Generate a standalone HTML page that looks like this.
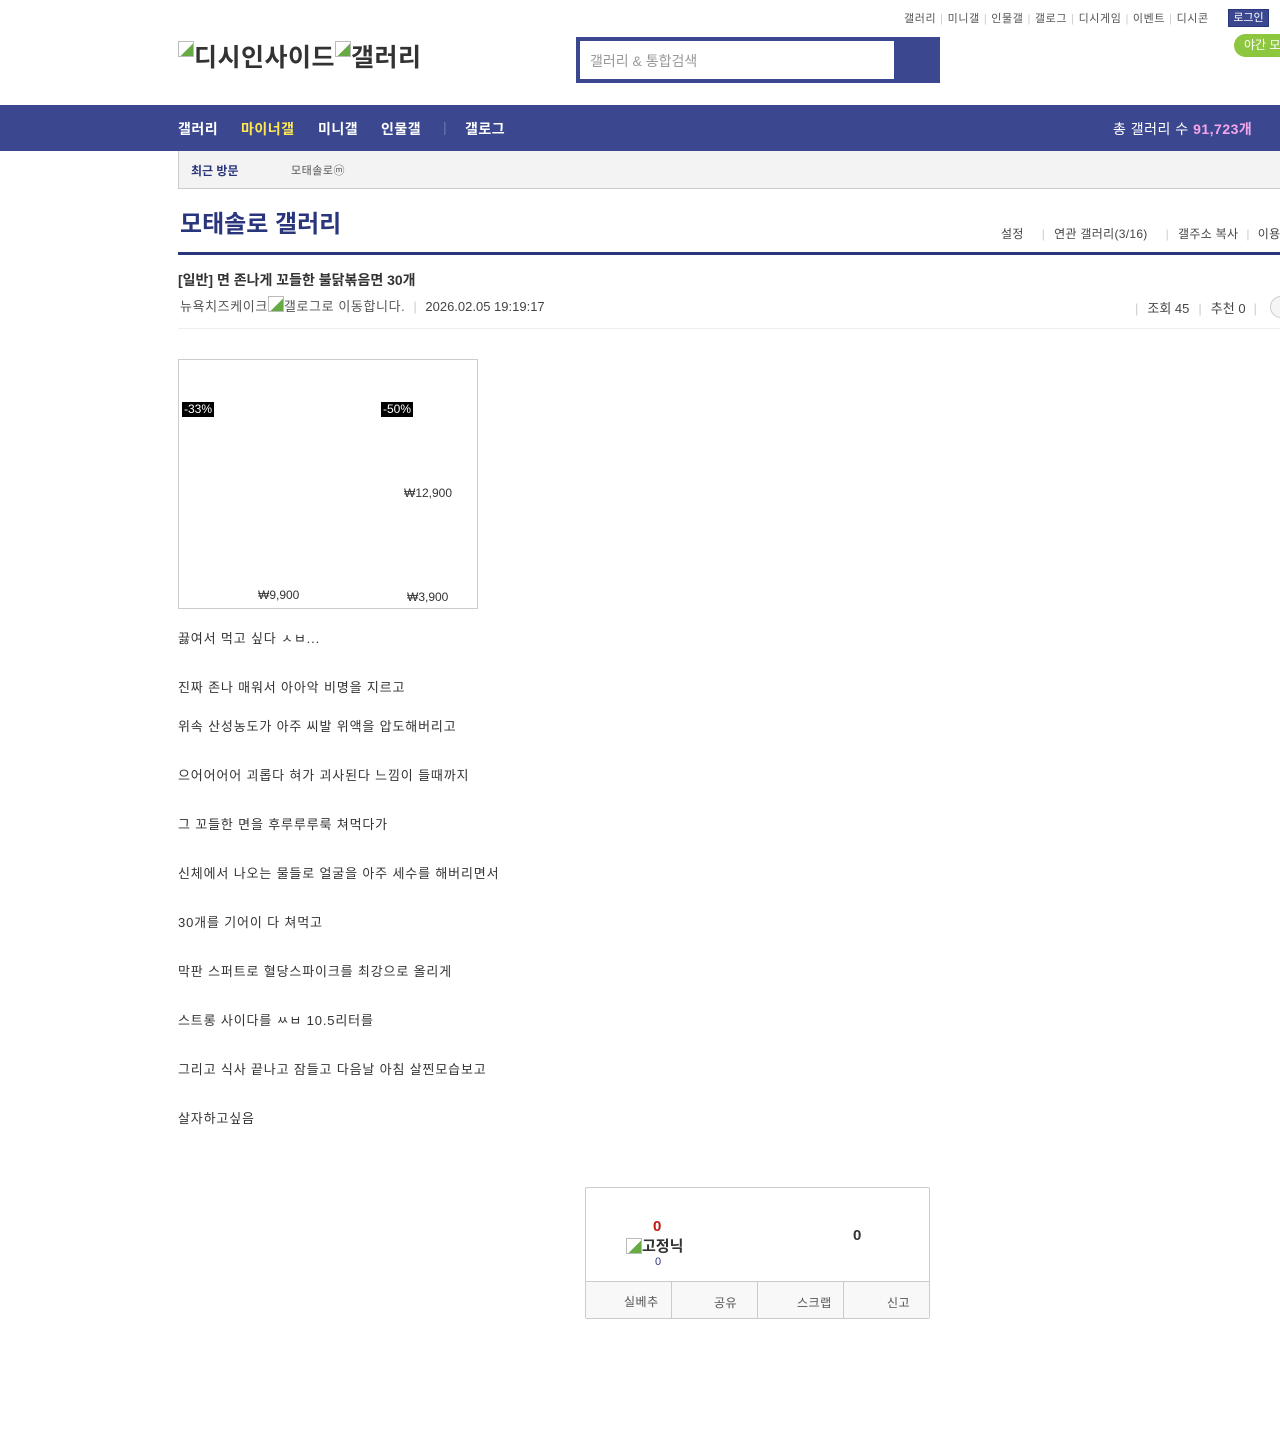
<!DOCTYPE html>
<html><head><meta charset="utf-8"><style>
*{margin:0;padding:0;box-sizing:border-box}
body{width:1280px;height:1430px;overflow:hidden;background:#fff;font-family:"Liberation Sans","Noto Sans CJK KR",sans-serif;color:#333;position:relative}
.a{position:absolute;white-space:nowrap}
.top{top:10px;left:904px;font-size:11px;color:#555;letter-spacing:0.6px}
.top i{font-style:normal;color:#ccc;margin:0 4px}
.login{top:9px;left:1228px;width:41px;height:18px;background:#3b4890;border:1px solid #29367c;color:#fff;font-size:11px;text-align:center;line-height:16px}
.night{top:34px;left:1234px;width:70px;height:23px;background:#8dc63f;border-radius:12px;color:#fff;font-size:12px;line-height:23px;padding-left:10px}
.logo{top:38px;left:178px;font-size:25px;font-weight:bold;color:#333;letter-spacing:0.5px}
.br{display:inline-block;width:16px;height:16px;border:1px solid #bbb;background:linear-gradient(135deg,#fff 55%,#6a4 56%);vertical-align:top;margin-top:3px}
.search{top:37px;left:576px;width:364px;height:46px;background:#3b4890}
.search div{position:absolute;left:4px;top:4px;width:314px;height:38px;background:#fff;font-size:14px;color:#999;padding:13px 10px;line-height:14px}
.nav{top:105px;left:0;width:1280px;height:46px;background:#3b4890}
.nav span{position:absolute;top:14px;font-size:14px;font-weight:bold;color:#fff;letter-spacing:0.5px}
.sub{top:151px;left:178px;width:1102px;height:38px;background:#f3f3f3;border-left:1px solid #ccc;border-bottom:1px solid #ccc}
.h1{top:204px;left:180px;font-size:24px;font-weight:bold;color:#29367c}
.line{top:252px;left:178px;width:1102px;height:3px;background:#29367c}
.p{left:178px;font-size:13px;color:#333;letter-spacing:0.85px}
</style></head><body>
<div class="a top">갤러리<i>|</i>미니갤<i>|</i>인물갤<i>|</i>갤로그<i>|</i>디시게임<i>|</i>이벤트<i>|</i>디시콘</div>
<div class="a login">로그인</div>
<div class="a night">야간 모드</div>
<div class="a logo"><span class="br"></span>디시인사이드<span class="br"></span>갤러리</div>
<div class="a search"><div>갤러리 &amp; 통합검색</div></div>
<div class="a nav">
<span style="left:178px">갤러리</span><span style="left:241px;color:#ffe84f">마이너갤</span><span style="left:318px">미니갤</span><span style="left:381px">인물갤</span><span style="left:443px;color:#6b76b0;font-weight:normal">|</span><span style="left:465px">갤로그</span>
<span style="left:1113px;font-weight:normal">총 갤러리 수 <b style="color:#f5a6ea">91,723개</b></span></div>
<div class="a sub"><span class="a" style="left:12px;top:11px;font-size:12px;font-weight:bold;color:#29367c">최근 방문</span><span class="a" style="left:112px;top:11px;font-size:11px;color:#555;letter-spacing:0.5px">모태솔로ⓜ</span></div>
<div class="a h1">모태솔로 갤러리</div>
<div class="a" style="top:225px;left:1001px;font-size:12px;color:#444;letter-spacing:0.3px">설정<span style="color:#ccc;margin:0 9px 0 18px">|</span>연관 갤러리(3/16)<span style="color:#ccc;margin:0 9px 0 18px">|</span>갤주소 복사<span style="color:#ccc;margin:0 8px">|</span>이용안내</div>
<div class="a line"></div>
<div class="a" style="top:270px;left:178px;font-size:14px;font-weight:bold;color:#333">[일반] 면 존나게 꼬들한 불닭볶음면 30개</div>
<div class="a" style="top:296px;left:180px;font-size:13px;color:#555;letter-spacing:0.6px">뉴욕치즈케이크<span class="br" style="width:16px;height:16px;margin-top:0"></span>갤로그로 이동합니다.<span style="color:#ccc;margin:0 8px">|</span><span style="color:#444;letter-spacing:0">2026.02.05 19:19:17</span></div>
<div class="a" style="top:298px;left:1135px;font-size:13px;color:#444"><span style="color:#ccc;margin-right:9px">|</span>조회 45<span style="color:#ccc;margin:0 9px">|</span>추천 0<span style="color:#ccc;margin:0 8px">|</span></div>
<div class="a" style="top:296px;left:1270px;width:24px;height:22px;border:1px solid #ccc;border-radius:11px;background:#f5f5f5"></div>
<div class="a" style="top:328px;left:178px;width:1102px;height:1px;background:#eee"></div>
<div class="a" style="top:359px;left:178px;width:300px;height:250px;border:1px solid #ccc"></div>
<div class="a" style="top:402px;left:182px;background:#000;color:#fff;font-size:12px;padding:0 2px;line-height:15px">-33%</div>
<div class="a" style="top:402px;left:381px;background:#000;color:#fff;font-size:12px;padding:0 2px;line-height:15px">-50%</div>
<div class="a" style="top:486px;left:404px;font-size:12px;color:#333">₩12,900</div>
<div class="a" style="top:588px;left:258px;font-size:12px;color:#333">₩9,900</div>
<div class="a" style="top:590px;left:407px;font-size:12px;color:#333">₩3,900</div>
<div class="a p" style="top:628px">끓여서 먹고 싶다 ㅅㅂ...</div>
<div class="a p" style="top:677px">진짜 존나 매워서 아아악 비명을 지르고</div>
<div class="a p" style="top:716px">위속 산성농도가 아주 씨발 위액을 압도해버리고</div>
<div class="a p" style="top:765px">으어어어어 괴롭다 혀가 괴사된다 느낌이 들때까지</div>
<div class="a p" style="top:814px">그 꼬들한 면을 후루루루룩 쳐먹다가</div>
<div class="a p" style="top:863px">신체에서 나오는 물들로 얼굴을 아주 세수를 해버리면서</div>
<div class="a p" style="top:912px">30개를 기어이 다 쳐먹고</div>
<div class="a p" style="top:961px">막판 스퍼트로 혈당스파이크를 최강으로 올리게</div>
<div class="a p" style="top:1010px">스트롱 사이다를 ㅆㅂ 10.5리터를</div>
<div class="a p" style="top:1059px">그리고 식사 끝나고 잠들고 다음날 아침 살찐모습보고</div>
<div class="a p" style="top:1108px">살자하고싶음</div>
<div class="a" style="top:1187px;left:585px;width:345px;height:132px;border:1px solid #ccc;border-radius:2px"></div>
<div class="a" style="top:1218px;left:653px;font-size:15px;font-weight:bold;color:#c0170f">0</div>
<div class="a" style="top:1235px;left:626px;font-size:15px;font-weight:bold;color:#333"><span class="br" style="width:16px;height:16px;margin-top:3px"></span>고정닉</div>
<div class="a" style="top:1256px;left:655px;font-size:11px;color:#29367c">0</div>
<div class="a" style="top:1227px;left:853px;font-size:15px;font-weight:bold;color:#333">0</div>
<div class="a" style="top:1281px;left:586px;width:343px;height:37px;background:#f8f8f8;border-top:1px solid #ccc"></div>
<div class="a" style="top:1282px;left:671px;width:1px;height:36px;background:#ccc"></div>
<div class="a" style="top:1282px;left:757px;width:1px;height:36px;background:#ccc"></div>
<div class="a" style="top:1282px;left:843px;width:1px;height:36px;background:#ccc"></div>
<div class="a" style="top:1293px;left:624px;font-size:12px;color:#555;letter-spacing:0.5px">실베추</div>
<div class="a" style="top:1294px;left:714px;font-size:12px;color:#555;letter-spacing:0.5px">공유</div>
<div class="a" style="top:1294px;left:797px;font-size:12px;color:#555;letter-spacing:0.5px">스크랩</div>
<div class="a" style="top:1294px;left:887px;font-size:12px;color:#555;letter-spacing:0.5px">신고</div>
</body></html>
